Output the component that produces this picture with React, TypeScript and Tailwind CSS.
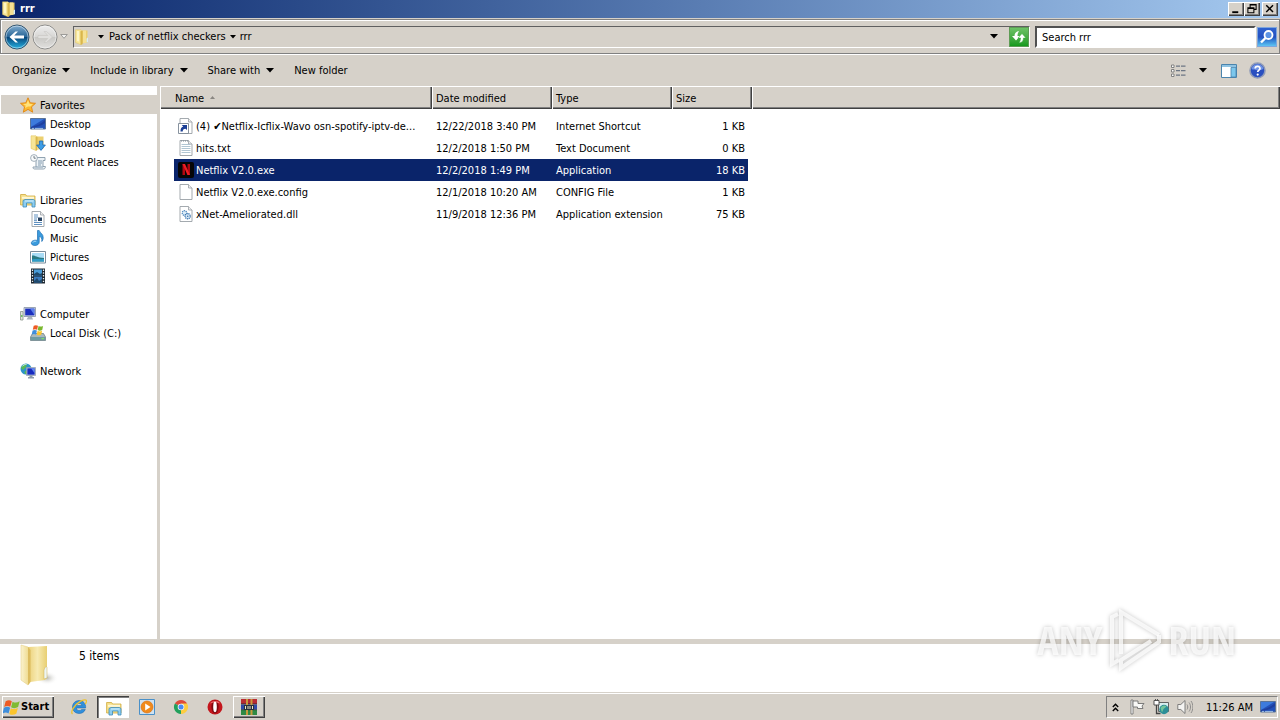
import type { ReactNode } from 'react';

const raised = 'bg-[#d6d1c9] shadow-[inset_1px_1px_0_#fff,inset_-1px_-1px_0_#404040,inset_-2px_-2px_0_#808080]';

const Svg = ({ size = 16, children }: { size?: number; children: ReactNode }) => (
    <svg width={size} height={size} viewBox="0 0 16 16" className="shrink-0" aria-hidden="true">
        {children}
    </svg>
);

const Caret = () => (
    <svg width="8" height="5" viewBox="0 0 8 5" className="shrink-0" aria-hidden="true">
        <path d="M0 0h8L4 4.400z" fill="#000" />
    </svg>
);

const SmallCaret = () => (
    <svg width="6" height="4" viewBox="0 0 6 4" className="shrink-0" aria-hidden="true">
        <path d="M0 0h6L3 3.500z" fill="#000" />
    </svg>
);

const FolderIcon = () => (
    <Svg>
        <path d="M6 1.500h7.500v12L8 14.500z" fill="#ecd070" />
        <path d="M9 1.500h3v12.200l-3 .4z" fill="#f5e194" />
        <path d="M1.500.8H7L8 2v13l-1 .8-5.500-2.300z" fill="#f7e596" stroke="#dcbd58" strokeWidth=".4" />
        <path d="M6.400 2.200L8.500 1.800v13.400l-2 .6z" fill="#d9b64c" />
        <path d="M3 2h2v10.500l-2-.6z" fill="#fdf5c5" />
        <path d="M12.500 9.500l1.500-1v4.600l-1.500.5z" fill="#d8eef8" />
    </Svg>
);

const LargeFolder = () => (
    <svg width="40" height="44" viewBox="0 0 40 44" className="shrink-0" aria-hidden="true">
        <defs>
            <linearGradient id="folderBack" x1="0" y1="0" x2="1" y2="0">
                <stop offset="0" stopColor="#ecd179" />
                <stop offset=".5" stopColor="#f7eab2" />
                <stop offset="1" stopColor="#e8cf72" />
            </linearGradient>
            <linearGradient id="folderFront" x1="0" y1="0" x2="1" y2="0">
                <stop offset="0" stopColor="#fbf3cf" />
                <stop offset="1" stopColor="#ecd684" />
            </linearGradient>
            <radialGradient id="folderShade">
                <stop offset="0" stopColor="#b9b9b3" />
                <stop offset="1" stopColor="#fff" stopOpacity="0" />
            </radialGradient>
        </defs>
        <ellipse cx="28" cy="34" rx="11" ry="7" fill="url(#folderShade)" />
        <path d="M9 3l19-1v32l-2 2-15 2z" fill="url(#folderBack)" />
        <path d="M25 26c1-3 2-4 3-3v11l-3 1z" fill="#edf6f4" stroke="#cdb25f" strokeWidth=".5" />
        <path d="M2 1l7 2 2 3v32l-2 3-7-5z" fill="url(#folderFront)" stroke="#e3cb7c" strokeWidth=".5" />
        <path d="M9 3l2.500 3v32L9 41z" fill="#dcbc5f" />
    </svg>
);

const StarIcon = () => (
    <Svg>
        <path d="M8 .8l2.200 5 5.300.5-4 3.600 1.200 5.300L8 12.400l-4.700 2.800 1.200-5.300-4-3.600 5.300-.5z" fill="#fdb92e" stroke="#e08614" strokeWidth=".9" />
        <path d="M8 3l1.400 3.800 3.600.4-2.700 2.400L8 9.400 5 11l.7-2.600L3 7.100l3.500-.4z" fill="#ffe27c" />
    </Svg>
);

const DesktopIcon = () => (
    <Svg>
        <path d="M.5 2.500h15v10.500H.5z" fill="#2351b8" stroke="#5b7497" />
        <path d="M1 3h13L1 11z" fill="#3d7bdd" />
        <path d="M1 11c5-1 10-3 14-7v3c-4 3-8 4-14 5z" fill="#1e3f9e" />
        <path d="M2 12.400h2M5 12.400h8" stroke="#b8d7f4" strokeWidth=".8" />
    </Svg>
);

const DownloadsIcon = () => (
    <Svg>
        <path d="M6 1.500h7.500v12L8 14.500z" fill="#ecd070" />
        <path d="M1 .8h5L7 2v13l-1 .5-5-2z" fill="#f7e596" stroke="#dcbd58" strokeWidth=".5" />
        <path d="M5.600 2l1.800-.2V15l-1.800.4z" fill="#d9b64c" />
        <path d="M9.400 6h3.400v4h2.600L11 15.400 6.600 10h2.800z" fill="#3d9de6" stroke="#1d67ae" strokeWidth=".8" />
    </Svg>
);

const RecentIcon = () => (
    <Svg>
        <path d="M5 3.500h10v3h-2v6h2.400c0 2-1 2.500-2 2.500H4.500c-1.200 0-1.500-1-1.500-2h3V6z" fill="#edf3f7" stroke="#8699a8" strokeWidth=".9" />
        <path d="M8 7h4M8 9h4M8 11h3M6 13h7" stroke="#7791a5" strokeWidth=".9" />
        <circle cx="4" cy="4" r="3.400" fill="#f9fbfc" stroke="#8d9da9" strokeWidth=".8" />
        <path d="M4 2v2.200h1.800" stroke="#52606b" strokeWidth=".8" fill="none" />
    </Svg>
);

const LibraryIcon = () => (
    <Svg>
        <path d="M.6 13V2.500h5l1 1.500h8.400v9z" fill="#f7e08a" stroke="#cfa93d" strokeWidth=".8" />
        <path d="M2 4.800h12v2H2z" fill="#fdf7d6" />
        <path d="M3 15V8.500l2-1h8.500l1.500 1V15h-3v-4H6.500v4z" fill="#8dcdf0" stroke="#3d8ab8" strokeWidth=".8" />
        <path d="M5 9h8.500" stroke="#d4effb" />
    </Svg>
);

const PageIcon = ({ children }: { children?: ReactNode }) => (
    <Svg>
        <path d="M2 .5h8.500L14 4v11.500H2z" fill="#fff" stroke="#9aa0a6" strokeWidth=".9" />
        <path d="M10.500.5V4H14" fill="#eee" stroke="#9aa0a6" strokeWidth=".8" />
        {children}
    </Svg>
);

const DocumentsIcon = () => (
    <PageIcon>
        <path d="M4 4h4M4 6h4M4 11.500h8M4 13.500h8" stroke="#4d83b9" strokeWidth=".9" />
        <path d="M8 6.500h4v3.500H8z" fill="#27415f" />
        <path d="M4 8h3M4 9.700h3" stroke="#4d83b9" strokeWidth=".9" />
    </PageIcon>
);

const MusicIcon = () => (
    <Svg>
        <path d="M7.500.5h1.700c.8 2.500 4.300 3.500 4 7.500-.1 1.500-.6 2.500-1.400 3.500.4-3-.8-5-2.600-5.200v5.900c0 2-2 3.300-4.300 3.300-2.300 0-3.600-1-3.600-2.500 0-2.200 3.500-3.500 6.200-2.500z" fill="#3a9bdd" stroke="#1e70b4" strokeWidth=".7" />
        <path d="M2.800 12.500c.6-1 2.200-1.400 3.400-1" stroke="#b7e1f9" strokeWidth=".9" fill="none" />
    </Svg>
);

const PicturesIcon = () => (
    <Svg>
        <path d="M.5 2.500h15v11.500H.5z" fill="#fff" stroke="#7b8c9b" />
        <path d="M2 4h12v8.500H2z" fill="#a9dcf6" />
        <path d="M2 6.500c3-.5 4 2 12 2.500v3.500H2z" fill="#2a7a83" />
        <path d="M2 10.500c4-1 8 0 12-.5v2.500H2z" fill="#2f9bc6" />
    </Svg>
);

const VideosIcon = () => (
    <Svg>
        <path d="M1 .5h14v15H1z" fill="#1d2730" />
        <path d="M4 1.500h8v6H4z" fill="#4a9dd9" />
        <path d="M4 8.500h8v6H4z" fill="#3b7cbf" />
        <path d="M4 6l3-2 3 2 2-1v2.500H4zM4 13l3-3 2 3 3-2v3.500H4z" fill="#1f4a6d" />
        <path d="M2.500 1.500v14M13.500 1.500v14" stroke="#e5edf2" strokeWidth="1.300" strokeDasharray="1.400 1.400" />
    </Svg>
);

const ComputerIcon = () => (
    <Svg>
        <path d="M.5 5.500H3v8.500H.5z" fill="#dfe4dc" stroke="#8b958a" strokeWidth=".8" />
        <path d="M1.200 9h1.200v2H1.200z" fill="#55b948" />
        <path d="M4 1.500h11.500v9H4z" fill="#d7dde5" stroke="#8592a3" strokeWidth=".8" />
        <path d="M5.200 2.600h9.200v6.800H5.200z" fill="#1b2fbe" />
        <path d="M10 2.600h4.400V9z" fill="#5c80ea" />
        <path d="M8 11h4l1 2.500H6.500z" fill="#aab3bd" />
    </Svg>
);

const WindowsFlag = () => (
    <svg width="17" height="17" viewBox="0 0 16 16" className="shrink-0" aria-hidden="true">
        <path d="M2.500 2.200c2.200-1.500 4-1.400 5.800-.2L6.800 7.400c-1.800-1.200-3.500-1.200-5.700.1z" fill="#ee5b24" />
        <path d="M9 2.500c2.100 1.200 4 1.200 6.700-.3l-1.500 5.400c-2.300 1.300-4.500 1.300-6.600.2z" fill="#80bb32" />
        <path d="M.9 8.300c2.200-1.400 4-1.300 5.800-.1l-1.500 5.400c-1.800-1.200-3.600-1.200-5.700.1z" fill="#3f8edb" />
        <path d="M7.400 8.600c2.100 1.100 4.200 1.100 6.600-.2l-1.500 5.400c-2.300 1.300-4.500 1.300-6.600.2z" fill="#fbc52c" />
    </svg>
);

const DiskIcon = () => (
    <Svg>
        <path d="M2.500 8.500h11l2 3.500v3.500H.5V12z" fill="#a9b8bd" stroke="#66777d" strokeWidth=".7" />
        <path d="M.8 12h14.500v3.200H.8z" fill="#6e9ba2" />
        <path d="M11.500 13.600H14" stroke="#7ee06a" strokeWidth="1.200" />
        <path d="M3.700.8C5.300-.1 6.700 0 8 .8l-.9 4c-1.400-.8-2.700-.8-4.300 0z" fill="#ee5b24" />
        <path d="M8.600 1c1.400.8 2.900.8 4.500 0l-.9 4c-1.600.9-3.100.9-4.500.1z" fill="#7ab82e" />
        <path d="M2.600 5.600c1.700-.9 3-.8 4.300 0l-.9 4c-1.400-.8-2.700-.8-4.300 0z" fill="#3f8edb" />
        <path d="M7.600 5.800c1.400.8 2.900.8 4.500-.1l-.9 4c-1.600.8-3.100.8-4.500 0z" fill="#fbc52c" />
    </Svg>
);

const NetworkIcon = () => (
    <Svg>
        <circle cx="6" cy="6" r="5.500" fill="#2d93c9" />
        <path d="M1 5c1-3 3.500-4.500 6-4l-1 3-3 3zM5 8l3-1v4.300c-2 .2-3-.6-3.500-1.300z" fill="#57b957" />
        <path d="M2 3.500c1.200-1.600 3-2.200 4.500-2" stroke="#c8ebf6" fill="none" />
        <path d="M6.500 4.500h9v8h-9z" fill="#d5dde8" stroke="#8896a8" strokeWidth=".7" />
        <path d="M7.300 5.300h7.400v6.400H7.300z" fill="#172cc0" />
        <path d="M11 5.300h3.700v5z" fill="#6187ee" />
        <path d="M9.500 12.500h3v1.500H14v1.500H8V14h1.500z" fill="#8e9cab" />
    </Svg>
);

const ShortcutIcon = () => (
    <PageIcon>
        <path d="M.5 5.500h10v10H.5z" fill="#fff" stroke="#7b8794" strokeWidth=".9" />
        <path d="M2.500 13.500c0-2.700.6-4.300 2.700-5L3.700 7H9v5l-1.500-1.300c-2 .3-2.800 1.100-2.800 2.800z" fill="#1c3f96" />
    </PageIcon>
);

const TextFileIcon = () => (
    <PageIcon>
        <path d="M3.500 4.500h9M3.500 6.500h9M3.500 8.500h9M3.500 10.500h9M3.500 12.500h9" stroke="#a8bfce" strokeWidth=".9" />
        <path d="M3 1h8" stroke="#7d8a94" strokeDasharray="1 1" />
    </PageIcon>
);

const NetflixIcon = () => (
    <Svg>
        <rect width="16" height="16" rx="2" fill="#060606" />
        <path d="M4.500 2H7v11H4.500zM9.500 2H12v11H9.500z" fill="#b20710" />
        <path d="M4.500 2H7l5 11H9.500z" fill="#ed1c24" />
    </Svg>
);

const DllIcon = () => (
    <PageIcon>
        <circle cx="6.500" cy="7" r="2.300" fill="#dcecf8" stroke="#4c86bd" strokeWidth="1.200" strokeDasharray="1.200 .6" />
        <circle cx="9.700" cy="10.200" r="2.600" fill="#dcecf8" stroke="#3a74ae" strokeWidth="1.300" strokeDasharray="1.200 .6" />
        <circle cx="9.700" cy="10.200" r=".8" fill="#3a74ae" />
    </PageIcon>
);

const IeIcon = () => (
    <Svg>
        <path
            fillRule="evenodd"
            d="M8.200 1.500c-3.900 0-6.700 2.900-6.700 6.500 0 3.700 2.800 6.500 6.700 6.500 2.900 0 5.200-1.500 6.100-4.100h-3.700c-.5.800-1.300 1.200-2.400 1.200-1.600 0-2.700-1-2.800-2.600h9.200c.4-4.300-2.200-7.500-6.400-7.500zM5.500 6.600c.3-1.300 1.200-2.200 2.700-2.200s2.500.9 2.700 2.200z"
            fill="#2f8fdc"
            stroke="#1260a8"
            strokeWidth=".5"
        />
        <path d="M1.500 15C-.8 13 3 6 9 2.600c3.500-2 6-2.300 6.400-1 .3.900-.3 2.200-1.300 3.600" fill="none" stroke="#edc22f" strokeWidth="1.300" />
    </Svg>
);

const MediaIcon = () => (
    <Svg>
        <path d="M.5.5h15v15H.5z" fill="#cfe2f1" stroke="#4a90c8" />
        <circle cx="8" cy="8" r="6" fill="#f08a1c" stroke="#d96c0b" strokeWidth=".6" />
        <path d="M6.200 4.500l5.300 3.500-5.300 3.500z" fill="#fff" />
    </Svg>
);

const ChromeIcon = () => (
    <Svg>
        <path d="M8 8L1.900 4.500a7 7 0 0 1 12.200 0z" fill="#de4a3b" />
        <path d="M8 8l6.100-3.500A7 7 0 0 1 8 15z" fill="#fdcd40" />
        <path d="M8 8v7A7 7 0 0 1 1.900 4.500z" fill="#22a05c" />
        <path d="M8 4.600h6.200L11 9.500z" fill="#fdcd40" />
        <circle cx="8" cy="8" r="3.300" fill="#f4f4f4" />
        <circle cx="8" cy="8" r="2.500" fill="#4a8af4" />
    </Svg>
);

const OperaIcon = () => (
    <Svg>
        <circle cx="8" cy="8" r="7.500" fill="#c4161c" />
        <ellipse cx="8" cy="8" rx="3.600" ry="6.500" fill="#7d0a10" />
        <path d="M3 4.500C4.500 1.500 11 1 13 4.500c-3-1.500-7-1.500-10 0z" fill="#ee7072" />
        <ellipse cx="8" cy="8" rx="1.800" ry="5.200" fill="#fff" />
    </Svg>
);

const WinrarIcon = () => (
    <Svg>
        <path d="M0 0h16v5H0z" fill="#b92c34" />
        <path d="M0 5.500h16v5H0z" fill="#3049a8" />
        <path d="M0 11h16v5H0z" fill="#2f8a45" />
        <path d="M0 5h16M0 10.700h16" stroke="#18202c" strokeWidth=".7" />
        <path d="M5 0h2v16H5zM9.500 0h2v16h-2z" fill="#c99a3c" />
        <path d="M3 6h10v5H3z" fill="#27303c" />
        <path d="M4.500 7v3M7 7v3M9 7v3M11.500 7v3" stroke="#efe6c8" />
    </Svg>
);

const NavArrow = ({ active }: { active?: boolean }) => (
    <svg width="26" height="26" viewBox="0 0 26 26" aria-hidden="true">
        <defs>
            <linearGradient id={active ? 'navOn' : 'navOff'} x1="0" y1="0" x2="0" y2="1">
                <stop offset="0" stopColor={active ? '#84aed0' : '#eeeeee'} />
                <stop offset=".48" stopColor={active ? '#2a6798' : '#d8d7d5'} />
                <stop offset=".52" stopColor={active ? '#07477c' : '#c9c8c5'} />
                <stop offset="1" stopColor={active ? '#27b4e4' : '#e2e1df'} />
            </linearGradient>
        </defs>
        <circle cx="13" cy="13" r="12" fill={active ? 'url(#navOn)' : 'url(#navOff)'} stroke={active ? '#33556f' : '#8d8d8b'} />
        <circle cx="13" cy="13" r="11" fill="none" stroke="#fff" strokeOpacity=".45" />
        {active ? (
            <path d="M5.500 13l6-5.500H14l-3.800 4H20v3h-9.800l3.800 4h-2.500z" fill="#fff" />
        ) : (
            <path d="M20.500 13l-6-5.500H12l3.800 4H6v3h9.800l-3.800 4h2.500z" fill="#e0dfdd" stroke="#c2c0bd" strokeWidth=".5" />
        )}
    </svg>
);

interface SidebarItem {
    label: string;
    icon: ReactNode;
    children?: SidebarItem[];
}

const sidebar: SidebarItem[] = [
    {
        label: 'Favorites',
        icon: <StarIcon />,
        children: [
            { label: 'Desktop', icon: <DesktopIcon /> },
            { label: 'Downloads', icon: <DownloadsIcon /> },
            { label: 'Recent Places', icon: <RecentIcon /> },
        ],
    },
    {
        label: 'Libraries',
        icon: <LibraryIcon />,
        children: [
            { label: 'Documents', icon: <DocumentsIcon /> },
            { label: 'Music', icon: <MusicIcon /> },
            { label: 'Pictures', icon: <PicturesIcon /> },
            { label: 'Videos', icon: <VideosIcon /> },
        ],
    },
    {
        label: 'Computer',
        icon: <ComputerIcon />,
        children: [{ label: 'Local Disk (C:)', icon: <DiskIcon /> }],
    },
    { label: 'Network', icon: <NetworkIcon /> },
];

const files = [
    {
        name: '(4) ✔Netflix-Icflix-Wavo osn-spotify-iptv-de...',
        date: '12/22/2018 3:40 PM',
        type: 'Internet Shortcut',
        size: '1 KB',
        icon: <ShortcutIcon />,
    },
    { name: 'hits.txt', date: '12/2/2018 1:50 PM', type: 'Text Document', size: '0 KB', icon: <TextFileIcon /> },
    { name: 'Netflix V2.0.exe', date: '12/2/2018 1:49 PM', type: 'Application', size: '18 KB', icon: <NetflixIcon />, selected: true },
    { name: 'Netflix V2.0.exe.config', date: '12/1/2018 10:20 AM', type: 'CONFIG File', size: '1 KB', icon: <PageIcon /> },
    { name: 'xNet-Ameliorated.dll', date: '11/9/2018 12:36 PM', type: 'Application extension', size: '75 KB', icon: <DllIcon /> },
];

const TitleBar = () => (
    <header className="flex h-[18px] items-center bg-linear-to-r from-[#0a246a] to-[#a6caf0] pr-[2px] pl-[1px]">
        <FolderIcon />
        <h1 className="ml-[3px] flex-1 font-bold text-white">rrr</h1>
        <button aria-label="Minimize" className={`flex h-[14px] w-4 items-center justify-center ${raised}`}>
            <Svg size={12}>
                <path d="M3 11h8v2.500H3z" />
            </Svg>
        </button>
        <button aria-label="Restore" className={`flex h-[14px] w-4 items-center justify-center ${raised}`}>
            <Svg size={12}>
                <path d="M5.500 5.500V2h8v6.500H11M5 2.500h9M2.500 6.500h8V13h-8zM2 7.300h9" fill="none" stroke="#000" strokeWidth="1.400" />
            </Svg>
        </button>
        <button aria-label="Close" className={`ml-[2px] flex h-[14px] w-4 items-center justify-center ${raised}`}>
            <Svg size={12}>
                <path d="M3 3l9 9M12 3l-9 9" stroke="#000" strokeWidth="2" />
            </Svg>
        </button>
    </header>
);

const AddressBar = () => (
    <div className="mt-px flex h-[35px] items-center border border-[#808080] bg-[#d6d1c9] pr-[2px] pl-[3px] shadow-[inset_1px_1px_0_#fff,0_1px_0_#fff]">
        <button aria-label="Back">
            <NavArrow active />
        </button>
        <button aria-label="Forward" className="ml-[2px]">
            <NavArrow />
        </button>
        <button aria-label="Recent pages" className="ml-[2px]">
            <svg width="8" height="5" viewBox="0 0 8 5" aria-hidden="true">
                <path d="M.7.5h6.600L4 4.300z" fill="#f4f3f1" stroke="#8a8a88" strokeWidth=".8" />
            </svg>
        </button>
        <nav className="ml-[5px] flex h-[22px] flex-1 items-center border border-t-[#606060] border-r-white border-b-white border-l-[#606060]" aria-label="Address">
            <FolderIcon />
            <span className="ml-2">
                <SmallCaret />
            </span>
            <a href="#pack" className="ml-[5px]">Pack of netflix checkers</a>
            <span className="ml-1">
                <SmallCaret />
            </span>
            <a href="#rrr" className="ml-1">rrr</a>
            <button aria-label="Previous locations" className="mr-[11px] ml-auto">
                <Caret />
            </button>
            <button aria-label="Refresh" className="h-5 w-5 border border-[#5e9c55] bg-linear-to-b from-[#6cc266] to-[#129a1c]">
                <svg width="18" height="18" viewBox="0 0 18 18" aria-hidden="true">
                    <path d="M2 8h2.500c0-3 1.500-4.500 4.500-5-1 1.500-1.500 3-1.500 5H10l-4 4.500z" fill="#fff" />
                    <path d="M16 10h-2.500c0 3-1.500 4.500-4.500 5 1-1.500 1.500-3 1.500-5H8l4-4.500z" fill="#fff" stroke="#2ca632" strokeWidth=".5" />
                </svg>
            </button>
        </nav>
        <input
            type="text"
            aria-label="Search rrr"
            defaultValue="Search rrr"
            className="ml-[5px] h-[22px] w-[221px] border-2 border-t-[#505050] border-r-white border-b-white border-l-[#505050] bg-white pt-px pl-[5px]"
        />
        <button aria-label="Search" className="ml-px h-5 w-5 border border-[#7fa6dc] bg-linear-to-b from-[#2f62cf] via-[#2450c0] to-[#5fc4f2]">
            <svg width="18" height="18" viewBox="0 0 18 18" aria-hidden="true">
                <circle cx="10.500" cy="7" r="4" fill="#5c93e4" stroke="#fff" strokeWidth="1.800" />
                <path d="M7.500 10L3 14.500" stroke="#fff" strokeWidth="2.400" />
            </svg>
        </button>
    </div>
);

const Toolbar = () => (
    <div className="mt-px flex h-[31px] items-center gap-5 bg-[#d6d1c9] pr-[14px] pl-3">
        {['Organize', 'Include in library', 'Share with'].map(label => (
            <button key={label} className="flex items-center gap-[6px]">
                {label}
                <Caret />
            </button>
        ))}
        <button>New folder</button>
        <div className="ml-auto flex items-center">
            <button aria-label="Change your view">
                <Svg>
                    <path d="M1.500 2H4v2.500H1.500zM1.500 6.500H4V9H1.500zM1.500 11H4v2.500H1.500z" fill="#fff" stroke="#777" strokeWidth=".9" />
                    <path d="M6 3.200h4M11 3.200h4.500M6 7.700h4M11 7.700h4.500M6 12.200h4M11 12.200h4.500" stroke="#6c7684" strokeWidth="1.200" />
                </Svg>
            </button>
            <button aria-label="More view options" className="ml-[13px]">
                <Caret />
            </button>
            <button aria-label="Show the preview pane" className="ml-[14px]">
                <Svg>
                    <path d="M.5 1.500h15v13H.5z" fill="#fff" stroke="#4a84ad" />
                    <path d="M1 2h14v2H1z" fill="#8fc3e2" />
                    <path d="M10 4.500h5V14h-5z" fill="#7cc7ec" stroke="#4a84ad" strokeWidth=".8" />
                </Svg>
            </button>
            <button aria-label="Get help" className="ml-3">
                <svg width="17" height="17" viewBox="0 0 17 17" aria-hidden="true">
                    <circle cx="8.500" cy="8.500" r="7.500" fill="#2a4fc0" stroke="#8f9bb8" strokeWidth="1.600" />
                    <path d="M2.500 7a6.200 6.200 0 0 1 12 0c-3 1.600-9 1.600-12 0z" fill="#6f92e4" />
                    <path d="M6.200 6.600c0-3 4.800-3 4.800-.2 0 1.800-2.300 1.700-2.300 3.700" fill="none" stroke="#fff" strokeWidth="1.700" />
                    <circle cx="8.700" cy="12.600" r="1.100" fill="#fff" />
                </svg>
            </button>
        </div>
    </div>
);

const Sidebar = () => (
    <aside className="w-40 shrink-0 border-r-3 border-[#d6d1c9] bg-white pt-[9px]">
        <ul className="flex flex-col gap-[19px]">
            {sidebar.map((group, index) => (
                <li key={group.label}>
                    <a
                        href={`#${group.label}`}
                        className={`ml-px flex h-[19px] items-center gap-1 pl-[19px] ${index === 0 ? 'bg-[#d6d1c9]' : ''}`}
                    >
                        {group.icon}
                        <span className="pt-[2px]">{group.label}</span>
                    </a>
                    {group.children && (
                        <ul>
                            {group.children.map(item => (
                                <li key={item.label}>
                                    <a href={`#${item.label}`} className="flex h-[19px] items-center gap-1 pl-[30px]">
                                        {item.icon}
                                        <span className="pt-[2px]">{item.label}</span>
                                    </a>
                                </li>
                            ))}
                        </ul>
                    )}
                </li>
            ))}
        </ul>
    </aside>
);

const FileTable = () => (
    <main className="min-w-0 flex-1">
        <table className="w-full table-fixed border-collapse">
            <colgroup>
                <col className="w-[272px]" />
                <col className="w-[120px]" />
                <col className="w-[120px]" />
                <col className="w-[80px]" />
                <col />
            </colgroup>
            <thead>
                <tr className="h-[23px] text-left">
                    <th className={`pt-[2px] pl-[15px] font-normal ${raised}`}>
                        <span className="flex items-center gap-[6px]">
                            Name
                            <svg width="5" height="3" viewBox="0 0 5 3" className="mb-[3px]" aria-hidden="true">
                                <path d="M0 3h5L2.500 0z" fill="#8a8782" />
                            </svg>
                        </span>
                    </th>
                    <th className={`pt-[2px] pl-1 font-normal ${raised}`}>Date modified</th>
                    <th className={`pt-[2px] pl-1 font-normal ${raised}`}>Type</th>
                    <th className={`pt-[2px] pl-1 font-normal ${raised}`}>Size</th>
                    <td className={raised} />
                </tr>
            </thead>
            <tbody className="before:block before:h-[6px] before:content-['']">
                {files.map(file => {
                    const fill = file.selected ? 'bg-[#0a246a] text-white' : '';
                    return (
                        <tr key={file.name} className="whitespace-nowrap">
                            <td className="pl-[14px]">
                                <div className={`flex h-[22px] items-center gap-[2px] pl-1 ${fill}`}>
                                    {file.icon}
                                    <span className="pt-[2px]">{file.name}</span>
                                </div>
                            </td>
                            <td>
                                <div className={`flex h-[22px] items-center pt-[2px] pl-1 ${fill}`}>{file.date}</div>
                            </td>
                            <td>
                                <div className={`flex h-[22px] items-center pt-[2px] pl-1 ${fill}`}>{file.type}</div>
                            </td>
                            <td className="pr-1">
                                <div className={`flex h-[22px] items-center justify-end pt-[2px] pr-[3px] ${fill}`}>{file.size}</div>
                            </td>
                            <td />
                        </tr>
                    );
                })}
            </tbody>
        </table>
    </main>
);

const Watermark = () => (
    <div
        className="pointer-events-none absolute right-[44px] bottom-[44px] flex items-center gap-[2px] font-['Open_Sans_Condensed','Roboto_Condensed','Liberation_Sans_Narrow',sans-serif] text-[40px] leading-[72px] text-white/75 drop-shadow-[0_0_2px_rgba(0,0,0,0.3)]"
        aria-hidden="true"
    >
        <span>ANY</span>
        <svg width="62" height="72" viewBox="0 0 62 72">
            <g fill="none" stroke="#fff" strokeOpacity=".75" strokeWidth="4">
                <path d="M14 10l-6 3v47l7-4" />
                <path d="M17 50V8l38 23" />
                <path d="M55 31v7L17 64v-8l30-19" />
            </g>
        </svg>
        <span>RUN</span>
    </div>
);

const slot = 'flex h-[22px] w-8 items-center justify-center';

const Taskbar = () => (
    <footer className="flex h-[28px] items-center border-t border-[#d6d1c9] bg-[#d6d1c9] pt-px pr-[2px] pl-[2px] shadow-[inset_0_1px_0_#fff]">
        <button className={`flex h-[22px] w-[52px] items-center gap-px pl-px font-bold ${raised}`}>
            <WindowsFlag />
            Start
        </button>
        <div className="ml-[9px] flex gap-[2px]">
            <button aria-label="Internet Explorer" className={slot}>
                <IeIcon />
            </button>
            <button aria-label="Windows Explorer" className={`${slot} border-t border-l border-[#404040] bg-white shadow-[inset_1px_1px_0_#808080]`}>
                <LibraryIcon />
            </button>
            <button aria-label="Media Player" className={slot}>
                <MediaIcon />
            </button>
            <button aria-label="Chrome" className={slot}>
                <ChromeIcon />
            </button>
            <button aria-label="Opera" className={slot}>
                <OperaIcon />
            </button>
            <button aria-label="WinRAR" className={`${slot} ${raised}`}>
                <WinrarIcon />
            </button>
        </div>
        <div className="ml-auto flex h-[22px] items-center border border-t-[#808080] border-r-white border-b-white border-l-[#808080] pr-px pl-[5px]">
            <button aria-label="Show hidden icons">
                <svg width="7" height="9" viewBox="0 0 7 9" aria-hidden="true">
                    <path d="M.8 4L3.500 1.300 6.200 4M.8 8l2.700-2.700L6.200 8" fill="none" stroke="#000" strokeWidth="1.400" />
                </svg>
            </button>
            <button aria-label="Action Center" className="ml-[10px]">
                <Svg>
                    <path d="M2 1h2v14H2z" fill="#fff" stroke="#6a6a6a" strokeWidth=".8" />
                    <path d="M4 2h5v2.500h6l-2 2.500 1 2.500H8.500V8H4z" fill="#f8f8f6" stroke="#6f6f6f" strokeWidth=".9" />
                </Svg>
            </button>
            <button aria-label="Network" className="ml-2">
                <Svg>
                    <path d="M5.500 3.500h10v9h-10z" fill="#d8eeee" stroke="#555" strokeWidth=".9" />
                    <path d="M1 1.500h5V6H1zM2.500 0v1.500M4.500 0v1.500" fill="#fff" stroke="#444" strokeWidth=".9" />
                    <path d="M3.500 6v8.500h4" fill="none" stroke="#444" strokeWidth="1.300" />
                    <circle cx="11" cy="10.500" r="4.700" fill="#2c8f98" />
                    <path d="M7.500 9c1-2 4-3.500 6-1.500l-3 2.500L9 13.500z" fill="#74c59a" />
                </Svg>
            </button>
            <button aria-label="Volume" className="ml-2">
                <Svg>
                    <path d="M.8 5.500h3L8 1.500v13l-4.200-4h-3z" fill="#f4f4f2" stroke="#737373" strokeWidth=".9" />
                    <path d="M10 5.500c1 1.500 1 3.500 0 5M12 3.500c2 2.500 2 6.500 0 9M14 2c2.500 3.500 2.500 8.500 0 12" fill="none" stroke="#858585" strokeWidth=".9" />
                </Svg>
            </button>
            <time className="ml-[13px] pt-[2px] text-center whitespace-nowrap">11:26 AM</time>
            <button aria-label="Show desktop" className="ml-[7px]">
                <DesktopIcon />
            </button>
        </div>
    </footer>
);

export default function App() {
    return (
        <div className="relative flex min-h-screen flex-col bg-[#d6d1c9] font-['Tahoma','DejaVu_Sans_Condensed','Noto_Sans',sans-serif] text-[11px] leading-[14px] text-black">
            <TitleBar />
            <AddressBar />
            <Toolbar />
            <div className="flex flex-1 bg-white">
                <Sidebar />
                <FileTable />
            </div>
            <section className="flex h-[53px] items-start border-t-5 border-[#d6d1c9] bg-white pl-[19px]" aria-label="Details">
                <LargeFolder />
                <p className="mt-1 ml-5 text-xs">5 items</p>
            </section>
            <Taskbar />
            <Watermark />
        </div>
    );
}
